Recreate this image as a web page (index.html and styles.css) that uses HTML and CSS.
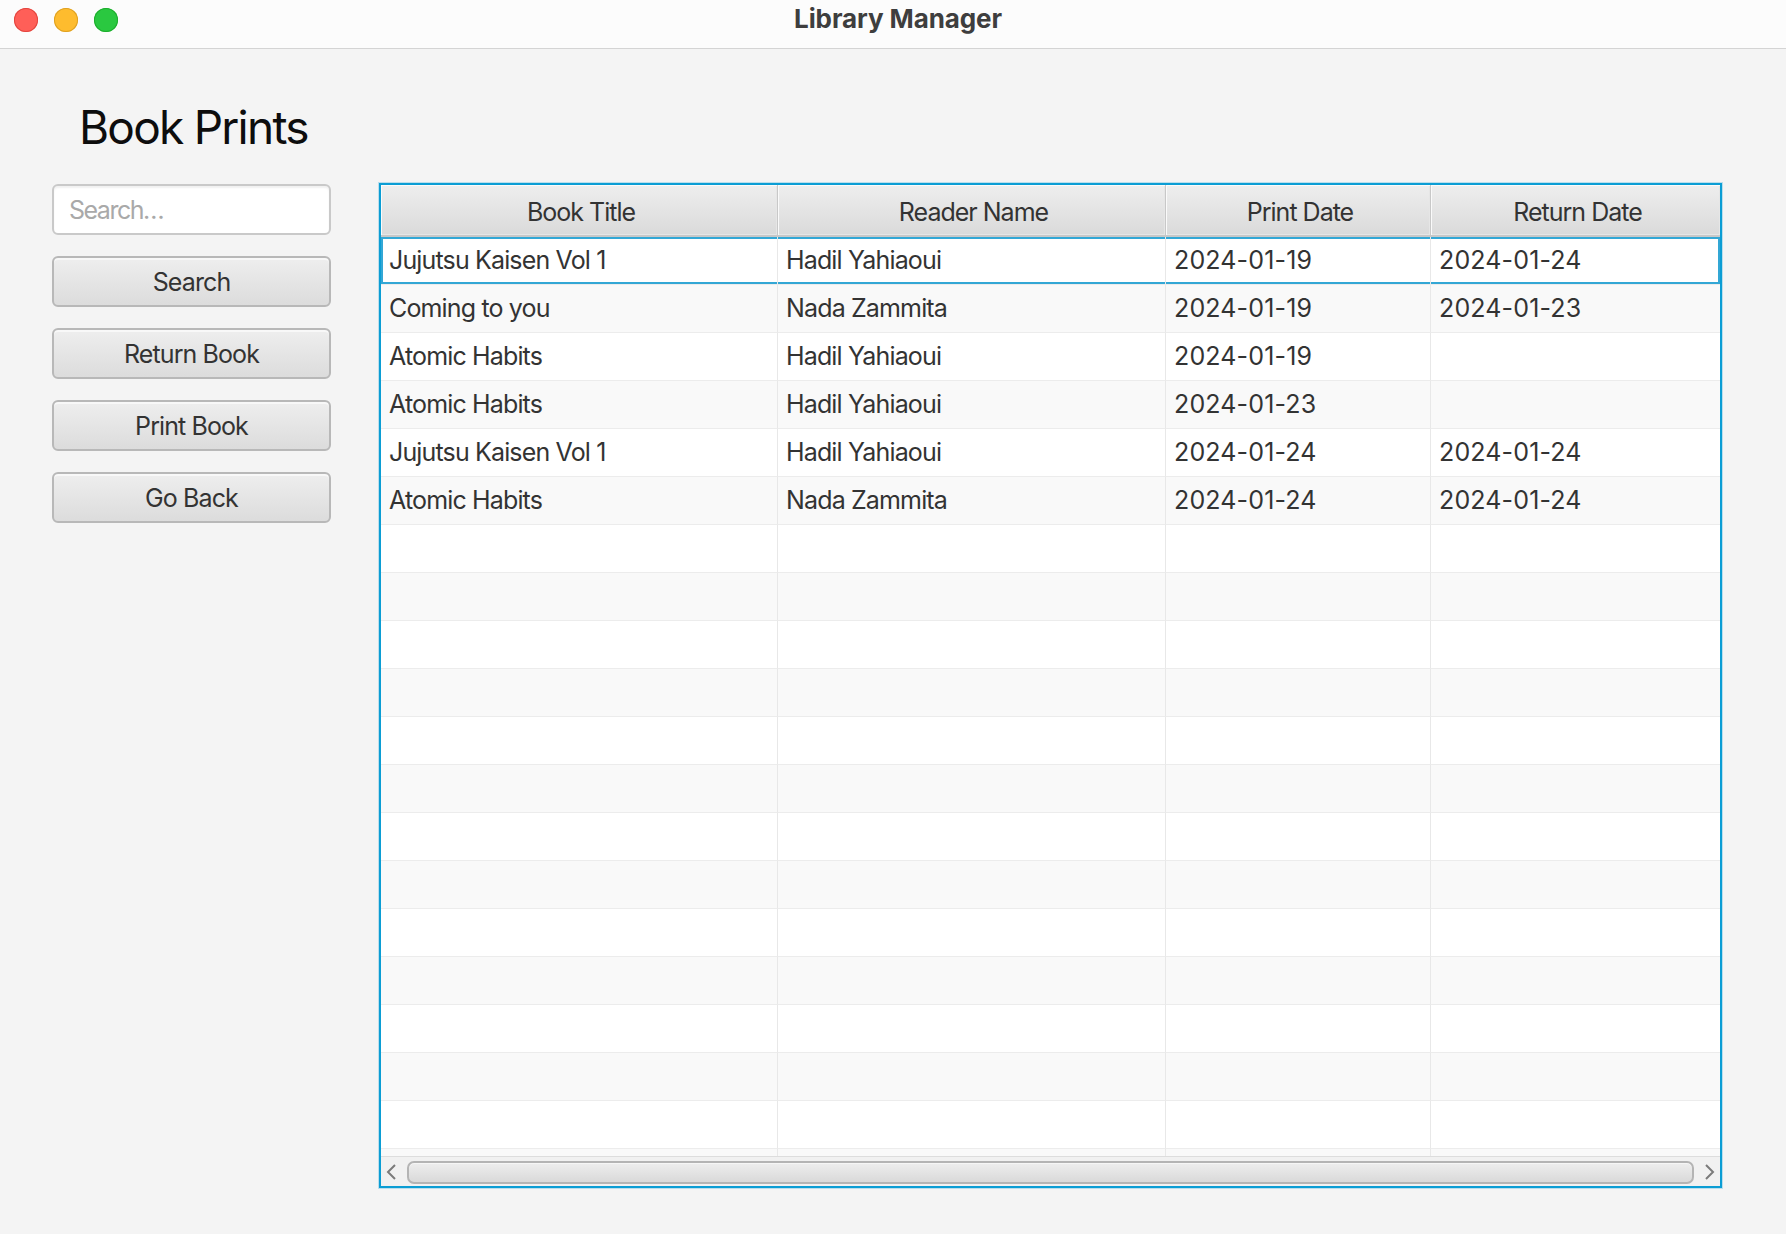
FILE: index.html
```html
<!DOCTYPE html>
<html lang="en">
<head>
<meta charset="utf-8">
<title>Library Manager</title>
<link rel="stylesheet" href="styles.css">
</head>
<body>
<div class="window">
  <header class="titlebar">
    <div class="lights">
      <span class="light light-close"></span>
      <span class="light light-min"></span>
      <span class="light light-max"></span>
    </div>
    <div class="window-title">Library Manager</div>
    <div class="titlebar-spacer"></div>
  </header>

  <main class="content">
    <h1 class="heading">Book Prints</h1>
    <div class="workspace">
      <aside class="sidebar">
        <input class="search-field" type="text" placeholder="Search…">
        <button class="btn" type="button">Search</button>
        <button class="btn" type="button">Return Book</button>
        <button class="btn" type="button">Print Book</button>
        <button class="btn" type="button">Go Back</button>
      </aside>

      <section class="tableview">
        <div class="thead">
          <div class="th">Book Title</div>
          <div class="th">Reader Name</div>
          <div class="th">Print Date</div>
          <div class="th">Return Date</div>
        </div>
        <div class="tbody">
          <div class="tr selected"><div class="td">Jujutsu Kaisen Vol 1</div><div class="td">Hadil Yahiaoui</div><div class="td date">2024-01-19</div><div class="td date">2024-01-24</div></div>
          <div class="tr"><div class="td">Coming to you</div><div class="td">Nada Zammita</div><div class="td date">2024-01-19</div><div class="td date">2024-01-23</div></div>
          <div class="tr"><div class="td">Atomic Habits</div><div class="td">Hadil Yahiaoui</div><div class="td date">2024-01-19</div><div class="td date"></div></div>
          <div class="tr"><div class="td">Atomic Habits</div><div class="td">Hadil Yahiaoui</div><div class="td date">2024-01-23</div><div class="td date"></div></div>
          <div class="tr"><div class="td">Jujutsu Kaisen Vol 1</div><div class="td">Hadil Yahiaoui</div><div class="td date">2024-01-24</div><div class="td date">2024-01-24</div></div>
          <div class="tr"><div class="td">Atomic Habits</div><div class="td">Nada Zammita</div><div class="td date">2024-01-24</div><div class="td date">2024-01-24</div></div>
          <div class="tr"><div class="td"></div><div class="td"></div><div class="td"></div><div class="td"></div></div>
          <div class="tr"><div class="td"></div><div class="td"></div><div class="td"></div><div class="td"></div></div>
          <div class="tr"><div class="td"></div><div class="td"></div><div class="td"></div><div class="td"></div></div>
          <div class="tr"><div class="td"></div><div class="td"></div><div class="td"></div><div class="td"></div></div>
          <div class="tr"><div class="td"></div><div class="td"></div><div class="td"></div><div class="td"></div></div>
          <div class="tr"><div class="td"></div><div class="td"></div><div class="td"></div><div class="td"></div></div>
          <div class="tr"><div class="td"></div><div class="td"></div><div class="td"></div><div class="td"></div></div>
          <div class="tr"><div class="td"></div><div class="td"></div><div class="td"></div><div class="td"></div></div>
          <div class="tr"><div class="td"></div><div class="td"></div><div class="td"></div><div class="td"></div></div>
          <div class="tr"><div class="td"></div><div class="td"></div><div class="td"></div><div class="td"></div></div>
          <div class="tr"><div class="td"></div><div class="td"></div><div class="td"></div><div class="td"></div></div>
          <div class="tr"><div class="td"></div><div class="td"></div><div class="td"></div><div class="td"></div></div>
          <div class="tr"><div class="td"></div><div class="td"></div><div class="td"></div><div class="td"></div></div>
          <div class="tr"><div class="td"></div><div class="td"></div><div class="td"></div><div class="td"></div></div>
          <div class="tr"><div class="td"></div><div class="td"></div><div class="td"></div><div class="td"></div></div>
        </div>
        <div class="hscroll">
          <span class="arrow arrow-left">
            <svg width="12" height="18" viewBox="0 0 12 18"><polyline points="10,2 3,9 10,16" fill="none" stroke="#7b7b7b" stroke-width="2"/></svg>
          </span>
          <span class="thumb"></span>
          <span class="arrow arrow-right">
            <svg width="12" height="18" viewBox="0 0 12 18"><polyline points="2,2 9,9 2,16" fill="none" stroke="#7b7b7b" stroke-width="2"/></svg>
          </span>
        </div>
      </section>
    </div>
  </main>
</div>
</body>
</html>
```

FILE: styles.css
```css
* {
  box-sizing: border-box;
}

html, body {
  margin: 0;
  padding: 0;
}

body {
  font-family: Inter, "Noto Sans", "Liberation Sans", sans-serif;
  color: #333333;
  background: #f4f4f4;
}

.window {
  height: 100vh;
  display: flex;
  flex-direction: column;
  background: #f4f4f4;
}

/* ---------- title bar ---------- */
.titlebar {
  height: 49px;
  flex: none;
  display: grid;
  grid-template-columns: 1fr auto 1fr;
  align-items: center;
  background: #fcfcfc;
  border-bottom: 1px solid #d4d4d4;
}

.lights {
  display: flex;
  gap: 16px;
  padding-left: 14px;
  padding-bottom: 8px;
}

.light {
  width: 24px;
  height: 24px;
  border-radius: 50%;
  display: block;
}

.light-close { background: #ff5f58; box-shadow: inset 0 0 0 1px #e2463f; }
.light-min   { background: #febc2e; box-shadow: inset 0 0 0 1px #dea123; }
.light-max   { background: #2ac840; box-shadow: inset 0 0 0 1px #1dad2c; }

.window-title {
  font-weight: 700;
  font-size: 26px;
  color: #3e3e3e;
  padding-bottom: 12px;
  padding-left: 10px;
  letter-spacing: -0.1px;
}

/* ---------- content ---------- */
.content {
  flex: 1;
  min-height: 0;
  display: flex;
  flex-direction: column;
  padding: 50px 64px 46px 52px;
}

.heading {
  margin: 0 0 28px 27px;
  font-size: 46px;
  line-height: 56px;
  font-weight: 400;
  color: #0d0d0d;
  letter-spacing: -1.75px;
}

.workspace {
  flex: 1;
  min-height: 0;
  display: flex;
  gap: 48px;
}

/* ---------- sidebar ---------- */
.sidebar {
  width: 279px;
  flex: none;
  display: flex;
  flex-direction: column;
  gap: 21px;
  padding-top: 1px;
}

.search-field {
  height: 51px;
  width: 100%;
  margin: 0;
  padding: 0 0 0 15px;
  font-family: inherit;
  font-size: 25px;
  letter-spacing: -1.5px;
  color: #333;
  background: #ffffff;
  border: 2px solid #c9c9c9;
  border-radius: 6px;
  box-shadow: inset 0 2px 2px rgba(0, 0, 0, 0.06);
  outline: none;
}

.search-field::placeholder {
  color: #a9a9a9;
}

.btn {
  height: 51px;
  width: 100%;
  margin: 0;
  padding: 0;
  font-family: inherit;
  font-size: 25px;
  letter-spacing: -0.9px;
  color: #333333;
  background: linear-gradient(#eeeeee, #dcdcdc);
  border: 2px solid #b8b8b8;
  border-radius: 6px;
  box-shadow: inset 0 2px 0 #f8f8f8;
}

/* ---------- table ---------- */
.tableview {
  flex: 1;
  min-width: 0;
  display: flex;
  flex-direction: column;
  border: 2px solid #0b9dd4;
  box-shadow: 0 0 0 1px rgba(11, 157, 212, 0.25);
  background: #ffffff;
}

.thead,
.tr {
  display: grid;
  grid-template-columns: 397px 388px 265px 1fr;
}

.thead {
  height: 52px;
  flex: none;
  border-bottom: 2px solid #c8c8c8;
}

.th {
  display: flex;
  align-items: center;
  justify-content: center;
  padding-top: 4px;
  padding-left: 4px;
  font-size: 25px;
  letter-spacing: -1px;
  color: #333333;
  background: linear-gradient(#eeeeee, #dadada);
  border-right: 1px solid #c8c8c8;
  box-shadow: inset 1px 1px 0 #fafafa, inset -1px -1px 0 #e6e6e6;
}

.th:last-child {
  border-right: none;
}

.tbody {
  flex: 1;
  min-height: 0;
  overflow: hidden;
}

.tr {
  height: 48px;
  background: #ffffff;
}

.tr:nth-child(even) {
  background: #f9f9f9;
}

.td {
  display: flex;
  align-items: center;
  padding-left: 8px;
  padding-bottom: 1px;
  font-size: 25px;
  letter-spacing: -0.85px;
  color: #333333;
  border-right: 1px solid #e8e8e8;
  border-bottom: 1px solid #ececec;
  white-space: nowrap;
  overflow: hidden;
}

.td.date {
  letter-spacing: 0.15px;
}

.td:last-child {
  border-right: none;
}

.tr.selected .td {
  box-shadow: inset 0 2px 0 #33a7d5, inset 0 -2px 0 #33a7d5;
}

.tr.selected .td:first-child {
  box-shadow: inset 0 2px 0 #33a7d5, inset 0 -2px 0 #33a7d5, inset 2px 0 0 #33a7d5;
}

.tr.selected .td:last-child {
  box-shadow: inset 0 2px 0 #33a7d5, inset 0 -2px 0 #33a7d5, inset -2px 0 0 #33a7d5;
}

/* ---------- horizontal scrollbar ---------- */
.hscroll {
  height: 30px;
  flex: none;
  display: flex;
  align-items: center;
  background: #f1f1f1;
  border-top: 1px solid #dddddd;
}

.arrow {
  width: 26px;
  height: 100%;
  flex: none;
  display: flex;
  align-items: center;
}

.arrow-left {
  justify-content: flex-start;
  padding-left: 4px;
}

.arrow-right {
  justify-content: flex-end;
  padding-right: 4px;
}

.thumb {
  flex: 1;
  height: 23px;
  margin-top: 1px;
  border: 2px solid #b4b4b4;
  border-radius: 7px;
  background: linear-gradient(#eeeeee, #d9d9d9);
  box-shadow: inset 0 1px 0 #f6f6f6;
}
```
